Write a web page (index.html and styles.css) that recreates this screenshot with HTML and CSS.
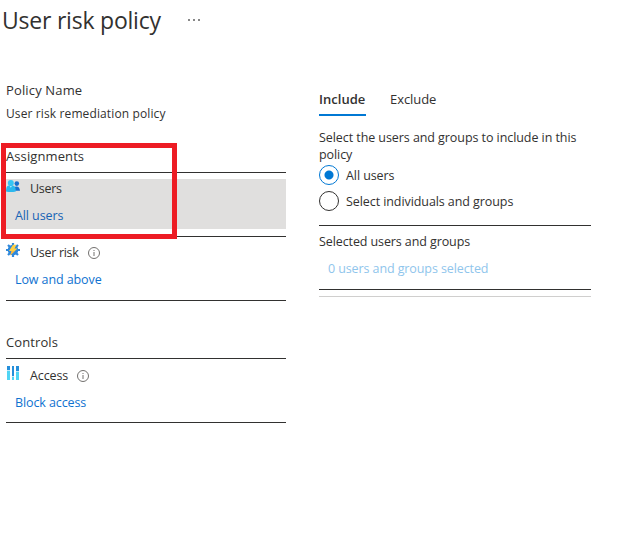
FILE: index.html
```html
<!DOCTYPE html>
<html lang="en">
<head>
<meta charset="utf-8">
<title>User risk policy</title>
<link rel="stylesheet" href="styles.css">
</head>
<body>
<header class="header"><h1>User risk policy</h1><span class="more"><i></i><i></i><i></i></span></header>
<main class="layout">
  <section class="policy">
    <div class="heading name">Policy Name</div>
    <div class="policy-name">User risk remediation policy</div>
    <div class="group">
      <h2>Assignments</h2>
      <div class="item-wrap">
        <div class="item selected">
          <div class="row low">
            <svg class="icon" viewBox="0 0 14 14"><circle cx="10.8" cy="4.600" r="2.300" fill="#1670cf"/><path d="M7.500 11.800q0-4.300 3-4.300t3.500 4.300z" fill="#1670cf"/><circle cx="4.800" cy="4" r="3" fill="#35c5f3"/><path d="M0 12.500q0-6 2.800-6h4q3 0 3 6-5 1.200-9.800 0z" fill="#2bb8ed"/><path d="M3.600 7h2.400L4.800 8.800z" fill="#a5e7fa"/></svg>
            <span class="tight">Users</span>
          </div>
          <a class="link dark">All users</a>
        </div>
        <div class="callout"></div>
      </div>
      <div class="item risk">
        <div class="row">
          <svg class="icon gear" viewBox="0 0 14 14"><circle cx="7" cy="7" r="5.300" fill="#2e88dc"/><path d="M7 0v14M0 7h14M2 2l10 10M12 2L2 12" stroke="#2e88dc" stroke-width="2.200"/><path d="M7 1.800h3.500L8.500 5.500h3L4.200 12.500l1.500-4.500H3z" fill="#ffd044"/><path d="M5.700 8h2.800L4.200 12.500z" fill="#ffb43b"/></svg>
          <span class="tight">User risk</span>
          <svg class="info" viewBox="0 0 12 12"><circle cx="6" cy="6" r="5.500"/><path d="M6 5v4M6 3v1"/></svg>
        </div>
        <a class="link">Low and above</a>
      </div>
    </div>
    <div class="group controls">
      <h2>Controls</h2>
      <div class="item access">
        <div class="row low">
          <svg class="icon" viewBox="0 0 14 14"><path fill="#50d5f4" d="M1 5h3v9H1zM6 11h2v3H6zM10 6h3v8h-3z"/><path fill="#258fda" d="M1 0h3v4H1zM6 0h2v10H6zM10 0h3v5h-3z"/><path fill="#bceafa" d="M1 4h3v1H1zM6 10h2v1H6zM10 5h3v1h-3z"/></svg>
          <span>Access</span>
          <svg class="info" viewBox="0 0 12 12"><circle cx="6" cy="6" r="5.500"/><path d="M6 5v4M6 3v1"/></svg>
        </div>
        <a class="link">Block access</a>
      </div>
    </div>
  </section>
  <section class="users">
    <nav class="tabs"><a class="active">Include</a><a>Exclude</a></nav>
    <p class="prompt">Select the users and groups to include in this<br>policy</p>
    <div class="option"><span class="radio checked"></span><span class="option-text">All users</span></div>
    <div class="option"><span class="radio"></span><span class="option-text">Select individuals and groups</span></div>
    <div class="selection">
      <div class="label">Selected users and groups</div>
      <a class="count">0 users and groups selected</a>
    </div>
    <div class="end"></div>
  </section>
</main>
</body>
</html>
```
FILE: styles.css
```css
* { box-sizing: border-box; }
body { margin: 0; background: #fff; color: #323130; font: 12.5px/18px "Open Sans", "Noto Sans", sans-serif; white-space: nowrap; }
h1, h2, p { margin: 0; font-weight: 400; }
.header { display: flex; align-items: center; height: 40px; padding-left: 2px; }
h1 { width: 186px; font-size: 23px; line-height: 32px; letter-spacing: -.22px; }
.more { display: flex; gap: 3px; }
.more i { width: 2px; height: 2px; background: #888; }
.layout { display: grid; grid-template-columns: 280px 272px; column-gap: 33px; padding-left: 6px; }
.policy { padding-top: 41px; }
.heading, h2 { font-size: 13px; line-height: 18px; }
.name { letter-spacing: .15px; }
.policy-name { margin-top: 6px; line-height: 18px; font-size: 12px; letter-spacing: .12px; }
.group { margin-top: 24px; }
h2 { height: 26px; border-bottom: 1px solid #323130; letter-spacing: .1px; }
.item-wrap { position: relative; padding: 6px 0 7px; border-bottom: 1px solid #323130; }
.item { height: 50px; }
.selected { background: #e0dfde; }
.row { display: flex; align-items: flex-start; height: 27px; line-height: 18px; }
.row.low { height: 28px; }
.row > span { margin-left: 10px; letter-spacing: -.1px; }
.row > .tight { letter-spacing: -.3px; }
.row.low > span { margin-top: 1px; }
.icon { width: 14px; height: 14px; flex: none; }
.gear { margin-top: -1px; }
.info { width: 12px; height: 12px; margin: 3px 0 0 9px; fill: none; stroke: #72706e; flex: none; }
.low .info { margin-top: 4px; }
.link { display: block; padding-left: 9px; color: #0f72d0; line-height: 18px; letter-spacing: -.1px; }
.link.dark { color: #1763b5; }
.risk, .access { height: 64px; padding-top: 7px; border-bottom: 1px solid #323130; }
.group.controls { margin-top: 32px; }
.callout { position: absolute; left: -5px; top: -30px; width: 176px; height: 96px; border: 5px solid #ed1c24; }
.users { padding-top: 50px; }
.tabs { display: flex; gap: 24px; height: 26px; font-size: 13px; line-height: 18px; letter-spacing: -.06px; }
.tabs .active { width: 47px; border-bottom: 2px solid #0078d4; font-weight: 600; letter-spacing: .03px; }
.prompt { margin-top: 13px; line-height: 17px; letter-spacing: -.07px; }
.option { display: flex; align-items: center; gap: 7px; height: 26px; letter-spacing: -.08px; }
.prompt + .option { margin-top: -1px; }
.option-text { padding-top: 2px; }
.radio { width: 20px; height: 20px; border: 1px solid #323130; border-radius: 50%; }
.radio.checked { border-color: #0078d4; background: radial-gradient(circle, #0078d4 0 4px, transparent 5px); }
.selection { height: 65px; margin-top: 11px; padding-top: 7px; border-top: 1px solid #323130; border-bottom: 1px solid #323130; letter-spacing: -.1px; }
.label { height: 27px; }
.count { display: block; padding-left: 9px; color: #8fc5ec; }
.end { height: 7px; border-bottom: 1px solid #d0cfce; }
```
